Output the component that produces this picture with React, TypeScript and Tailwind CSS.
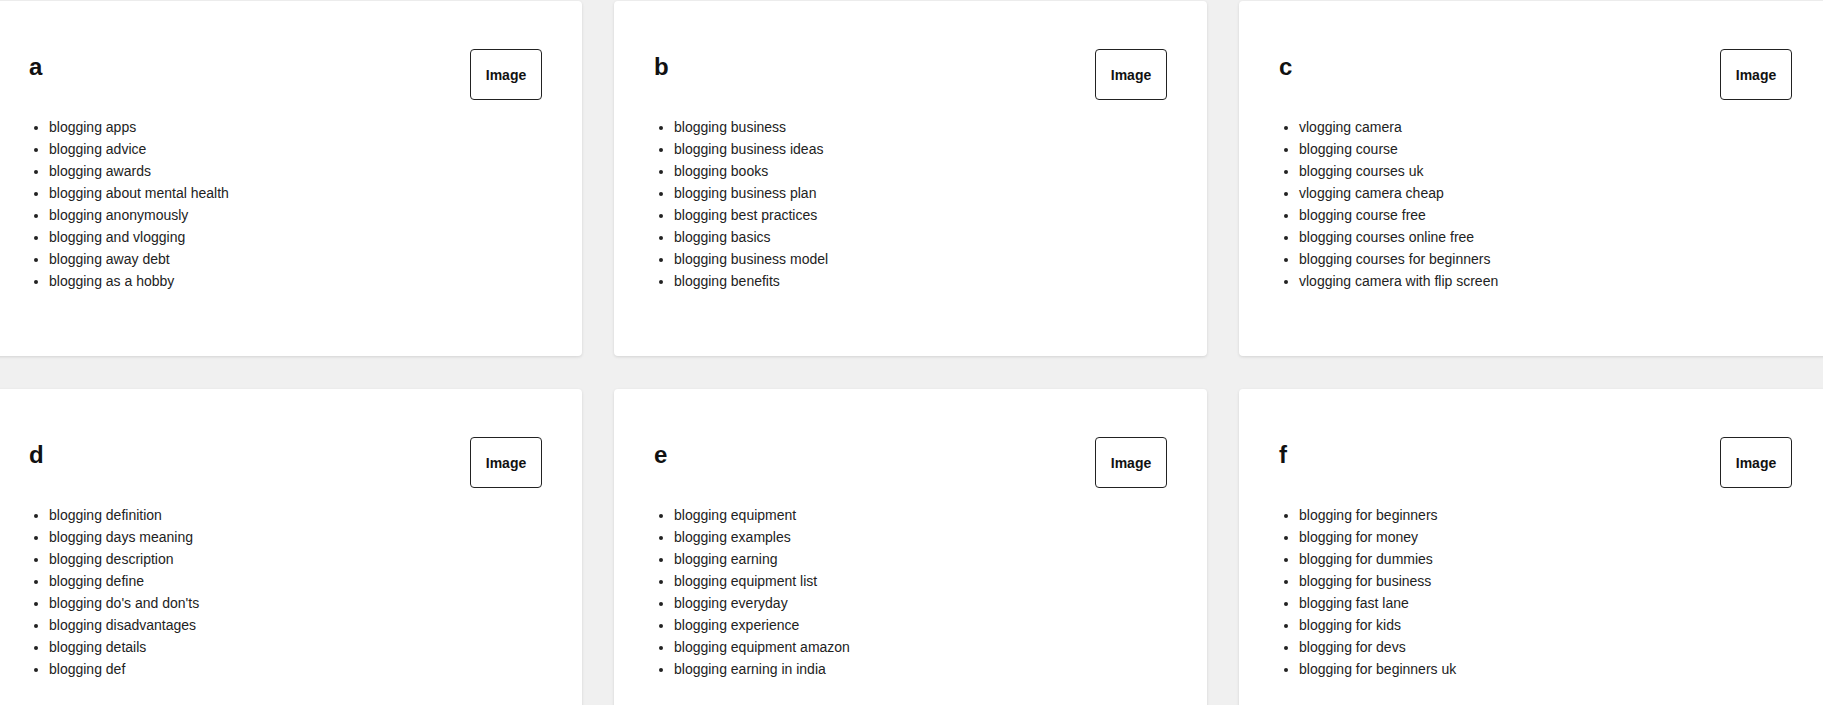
const GROUPS: { letter: string; items: string[] }[] = [
  {
    letter: "a",
    items: [
      "blogging apps",
      "blogging advice",
      "blogging awards",
      "blogging about mental health",
      "blogging anonymously",
      "blogging and vlogging",
      "blogging away debt",
      "blogging as a hobby",
    ],
  },
  {
    letter: "b",
    items: [
      "blogging business",
      "blogging business ideas",
      "blogging books",
      "blogging business plan",
      "blogging best practices",
      "blogging basics",
      "blogging business model",
      "blogging benefits",
    ],
  },
  {
    letter: "c",
    items: [
      "vlogging camera",
      "blogging course",
      "blogging courses uk",
      "vlogging camera cheap",
      "blogging course free",
      "blogging courses online free",
      "blogging courses for beginners",
      "vlogging camera with flip screen",
    ],
  },
  {
    letter: "d",
    items: [
      "blogging definition",
      "blogging days meaning",
      "blogging description",
      "blogging define",
      "blogging do's and don'ts",
      "blogging disadvantages",
      "blogging details",
      "blogging def",
    ],
  },
  {
    letter: "e",
    items: [
      "blogging equipment",
      "blogging examples",
      "blogging earning",
      "blogging equipment list",
      "blogging everyday",
      "blogging experience",
      "blogging equipment amazon",
      "blogging earning in india",
    ],
  },
  {
    letter: "f",
    items: [
      "blogging for beginners",
      "blogging for money",
      "blogging for dummies",
      "blogging for business",
      "blogging fast lane",
      "blogging for kids",
      "blogging for devs",
      "blogging for beginners uk",
    ],
  },
];

function KeywordCard({ letter, items }: { letter: string; items: string[] }) {
  return (
    <div className="h-[355px] rounded-[4px] bg-white px-10 pt-12 shadow-[0_1px_3px_rgba(0,0,0,0.12)]">
      <div className="flex items-start justify-between">
        <h2 className="mt-0.5 text-2xl leading-8 font-bold text-[#111]">{letter}</h2>
        <button
          type="button"
          className="h-[51px] w-[72px] rounded-[4px] border border-[#222] bg-white text-sm font-bold text-[#111]"
        >
          Image
        </button>
      </div>
      <ul className="mt-4 list-disc pl-5 text-sm leading-[22px] text-[#222]">
        {items.map((item) => (
          <li key={item}>{item}</li>
        ))}
      </ul>
    </div>
  );
}

export default function App() {
  return (
    <div
      className="h-[705px] overflow-hidden bg-[#f0f0f0]"
      style={{ fontFamily: '"Liberation Sans", Arial, sans-serif' }}
    >
      <div className="-ml-[11px] grid grid-cols-[repeat(3,593px)] gap-x-8 gap-y-[33px] pt-px">
        {GROUPS.map((g) => (
          <KeywordCard key={g.letter} letter={g.letter} items={g.items} />
        ))}
      </div>
    </div>
  );
}
